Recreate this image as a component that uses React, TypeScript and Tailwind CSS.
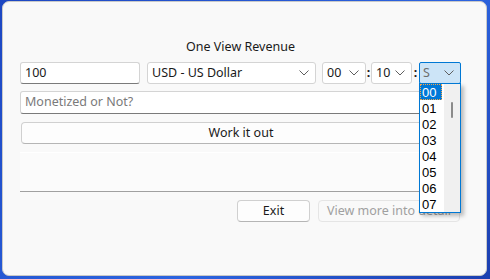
import React from 'react';

const Chevron = () => (
  <svg width="10" height="6" viewBox="0 0 10 6" className="shrink-0">
    <path d="M0.5 0.5 L5 5 L9.5 0.5" fill="none" stroke="#5f5f5f" strokeWidth="1" />
  </svg>
);

function Combo({ value, className }: { value: string; className: string }) {
  return (
    <div
      className={`flex h-[22px] items-center justify-between rounded-[3px] border border-[#d4d4d4] bg-white pl-[4px] pr-[6px] text-[#1a1a1a] ${className}`}
    >
      <span>{value}</span>
      <Chevron />
    </div>
  );
}

const hours = ['00', '01', '02', '03', '04', '05', '06', '07'];

export default function App() {
  return (
    <div className="relative h-[279px] w-[490px] overflow-hidden bg-[linear-gradient(135deg,#1d47c2,#2c64e0_60%,#1b3fb0)] font-['Noto_Sans','Liberation_Sans',sans-serif] text-[12.5px] leading-none">
      <div className="ml-[2px] mt-[1px] h-[275px] w-[485px] rounded-[7px] border border-[#c9c9c9] bg-[#f9f9f9] pl-[17px] pt-[37px]">
        <div className="w-[441px] text-center leading-[16px] text-[#1a1a1a]">One View Revenue</div>

        <div className="mt-[7px] flex h-[22px] w-[441px] items-center">
          <div className="flex h-[22px] w-[120px] items-center rounded-[3px] border border-[#d4d4d4] border-b-[#7a7a7a] bg-white px-[4px] text-[#1a1a1a]">
            100
          </div>
          <Combo value="USD - US Dollar" className="ml-[7px] w-[169px]" />
          <Combo value="00" className="ml-[6px] w-[44px]" />
          <span className="w-[5px] text-center font-bold text-[#1a1a1a]">:</span>
          <Combo value="10" className="w-[41px]" />
          <span className="w-[7px] text-center font-bold text-[#1a1a1a]">:</span>
          <div className="flex h-[22px] w-[42px] items-center justify-between rounded-[2px] border border-[#0078d4] bg-[#cce4f7] pl-[3px] pr-[6px] text-[#6d6d6d]">
            <span>S</span>
            <Chevron />
          </div>
        </div>

        <div className="mt-[7px] flex h-[23px] w-[441px] items-center rounded-[3px] border border-[#d4d4d4] border-b-[#7a7a7a] bg-white px-[4px] text-[#7a7a7a]">
          Monetized or Not?
        </div>

        <button className="ml-[1px] mt-[8px] flex h-[22px] w-[440px] items-center justify-center rounded-[4px] border border-[#d0d0d0] border-b-[#b5b5b5] bg-[#fdfdfd] text-[#1a1a1a]">
          Work it out
        </button>

        <div className="mt-[8px] h-[40px] w-[441px] border-t border-t-white border-b border-b-[#a0a0a0] bg-[#fbfbfb]" />

        <div className="mt-[8px] flex w-[441px] justify-end pr-[1px]">
          <button className="flex h-[22px] w-[73px] items-center justify-center rounded-[4px] border border-[#d0d0d0] border-b-[#b5b5b5] bg-[#fdfdfd] text-[#1a1a1a]">
            Exit
          </button>
          <button className="ml-[8px] flex h-[22px] w-[142px] items-center justify-center rounded-[4px] border border-[#e5e5e5] bg-[#f9f9f9] text-[#a0a0a0]">
            View more into detail
          </button>
        </div>
      </div>

      {/* open seconds list */}
      <div className="absolute left-[419px] top-[83px] flex h-[130px] w-[42px] border border-[#0078d4] bg-white font-['Liberation_Sans',sans-serif] text-[13px] shadow-[3px_3px_4px_rgba(0,0,0,0.25)]">
        <div className="flex flex-1 flex-col">
          {hours.map((h, i) => (
            <div
              key={h}
              className={
                i === 0
                  ? 'mr-[2px] flex h-[16px] items-center border border-dotted border-[#f3a64a] bg-[#0078d7] pl-[1px] text-white'
                  : 'flex h-[16px] items-center pl-[2px] text-black'
              }
            >
              {h}
            </div>
          ))}
        </div>
        <div className="relative w-[16px] bg-[#f0f0f0]">
          <div className="absolute left-[7px] top-[18px] h-[16px] w-[2px] rounded-full bg-[#8a8a8a]" />
        </div>
      </div>
    </div>
  );
}
